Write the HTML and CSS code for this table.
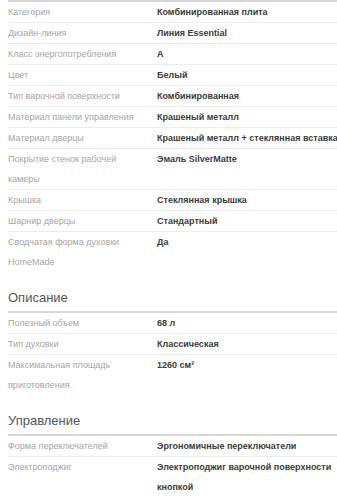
FILE: index.html
```html
<!DOCTYPE html>
<html lang="ru">
<head>
    <meta charset="UTF-8">
    <meta name="viewport" content="width=device-width, initial-scale=1.0">
    <title>Характеристики</title>
    <link rel="stylesheet" href="styles.css">
</head>
<body>

<div class="specs">
    <div class="spec-list first">
        <div class="spec-row"><span class="spec-name">Категория</span><span class="spec-value">Комбинированная плита</span></div>
        <div class="spec-row"><span class="spec-name">Дизайн-линия</span><span class="spec-value">Линия Essential</span></div>
        <div class="spec-row"><span class="spec-name">Класс энергопотребления</span><span class="spec-value">A</span></div>
        <div class="spec-row"><span class="spec-name">Цвет</span><span class="spec-value">Белый</span></div>
        <div class="spec-row"><span class="spec-name">Тип варочной поверхности</span><span class="spec-value">Комбинированная</span></div>
        <div class="spec-row"><span class="spec-name">Материал панели управления</span><span class="spec-value">Крашеный металл</span></div>
        <div class="spec-row"><span class="spec-name">Материал дверцы</span><span class="spec-value">Крашеный металл + стеклянная вставка</span></div>
        <div class="spec-row"><span class="spec-name">Покрытие стенок рабочей камеры</span><span class="spec-value">Эмаль SilverMatte</span></div>
        <div class="spec-row"><span class="spec-name">Крышка</span><span class="spec-value">Стеклянная крышка</span></div>
        <div class="spec-row"><span class="spec-name">Шарнир дверцы</span><span class="spec-value">Стандартный</span></div>
        <div class="spec-row"><span class="spec-name">Сводчатая форма духовки HomeMade</span><span class="spec-value">Да</span></div>
    </div>

    <h3 class="spec-title">Описание</h3>
    <div class="spec-list">
        <div class="spec-row"><span class="spec-name">Полезный объем</span><span class="spec-value">68 л</span></div>
        <div class="spec-row"><span class="spec-name">Тип духовки</span><span class="spec-value">Классическая</span></div>
        <div class="spec-row"><span class="spec-name">Максимальная площадь приготовления</span><span class="spec-value">1260 см²</span></div>
    </div>

    <h3 class="spec-title">Управление</h3>
    <div class="spec-list">
        <div class="spec-row"><span class="spec-name">Форма переключателей</span><span class="spec-value">Эргономичные переключатели</span></div>
        <div class="spec-row"><span class="spec-name">Электроподжиг</span><span class="spec-value">Электроподжиг варочной поверхности кнопкой</span></div>
    </div>
</div>

</body>
</html>
```

FILE: styles.css
```css
* {
    box-sizing: border-box;
}
body {
    margin: 0;
    font-family: "Liberation Sans", Arial, sans-serif;
    background-color: #fff;
    overflow-x: hidden;
}
.specs {
    width: 350px;
    padding-left: 8px;
}
.spec-list.first {
    border-top: 2px solid #d6d6d6;
}
.spec-title {
    margin: 16px 0 0;
    padding-bottom: 3px;
    font-size: 13px;
    font-weight: normal;
    line-height: 20px;
    color: #555;
    border-bottom: 2px solid #d6d6d6;
}
.spec-row {
    display: grid;
    grid-template-columns: 149px 1fr;
    font-size: 9px;
    line-height: 20px;
    border-bottom: 1px solid #ececec;
}
.spec-row:last-child {
    border-bottom: none;
}
.spec-name {
    color: #a6a6a6;
    padding-right: 12px;
}
.spec-value {
    color: #3c3c3c;
    font-weight: bold;
}
```
